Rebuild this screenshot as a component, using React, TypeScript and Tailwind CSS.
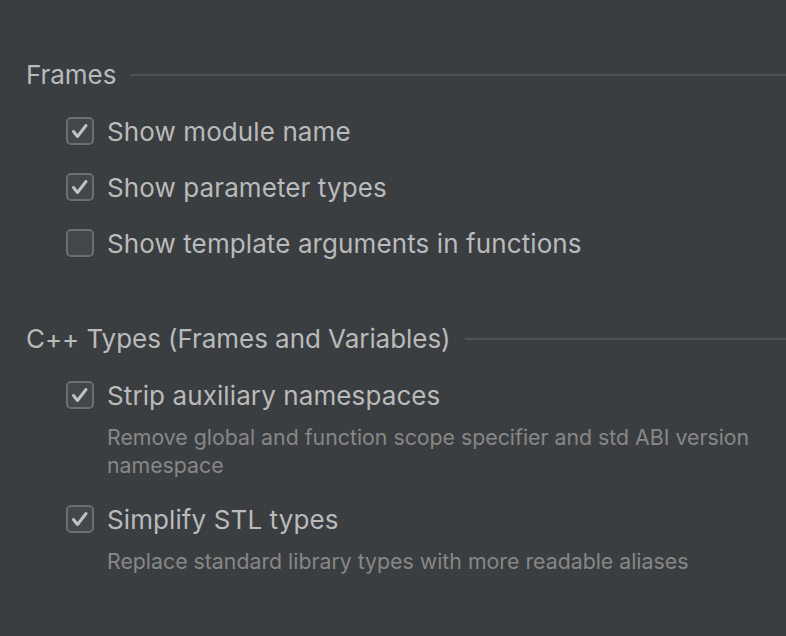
const font = { fontFamily: 'Inter, "Noto Sans", sans-serif' };

type Option = { label: string; checked: boolean; hint?: string };

const frames: Option[] = [
  { label: 'Show module name', checked: true },
  { label: 'Show parameter types', checked: true },
  { label: 'Show template arguments in functions', checked: false },
];

const cppTypes: Option[] = [
  {
    label: 'Strip auxiliary namespaces',
    checked: true,
    hint: 'Remove global and function scope specifier and std ABI version namespace',
  },
  {
    label: 'Simplify STL types',
    checked: true,
    hint: 'Replace standard library types with more readable aliases',
  },
];

const Checkbox = ({ checked }: { checked: boolean }) => (
  <div className="w-[28px] h-[28px] shrink-0 rounded-[5px] border-2 border-[#6b6e70] bg-[#43474a] flex items-center justify-center">
    {checked && (
      <svg width="24" height="24" viewBox="0 0 24 24" fill="none">
        <path d="M5.5 12.5 L9.5 17.5 L18 6.5" stroke="#c0c0c0" strokeWidth="3" strokeLinecap="round" strokeLinejoin="round" />
      </svg>
    )}
  </div>
);

const Section = ({ title, items }: { title: string; items: Option[] }) => (
  <div>
    <div className="flex items-center h-8 pl-[26px]">
      <span className="text-[26px] leading-8 text-[#bababa] whitespace-nowrap tracking-[-0.05px]">{title}</span>
      <div className="flex-1 h-[2px] bg-[#4f5255] ml-[14px]" />
    </div>
    <div className="mt-3 flex flex-col pl-[66px]">
      {items.map((item) => (
        <div key={item.label} className={item.hint ? 'mb-3' : ''}>
          <div className="flex items-center h-[56px] gap-[13px]">
            <Checkbox checked={item.checked} />
            <span className="text-[26px] text-[#bababa] whitespace-nowrap tracking-[0.1px]">{item.label}</span>
          </div>
          {item.hint && (
            <p className="pl-[41px] pr-[30px] text-[21.3px] leading-[28px] text-[#878787]">{item.hint}</p>
          )}
        </div>
      ))}
    </div>
  </div>
);

export default function App() {
  return (
    <div className="w-[786px] h-[636px] bg-[#3b3e41] pt-[59px] overflow-hidden" style={font}>
      <Section title="Frames" items={frames} />
      <div className="h-[52px]" />
      <Section title="C++ Types (Frames and Variables)" items={cppTypes} />
    </div>
  );
}
